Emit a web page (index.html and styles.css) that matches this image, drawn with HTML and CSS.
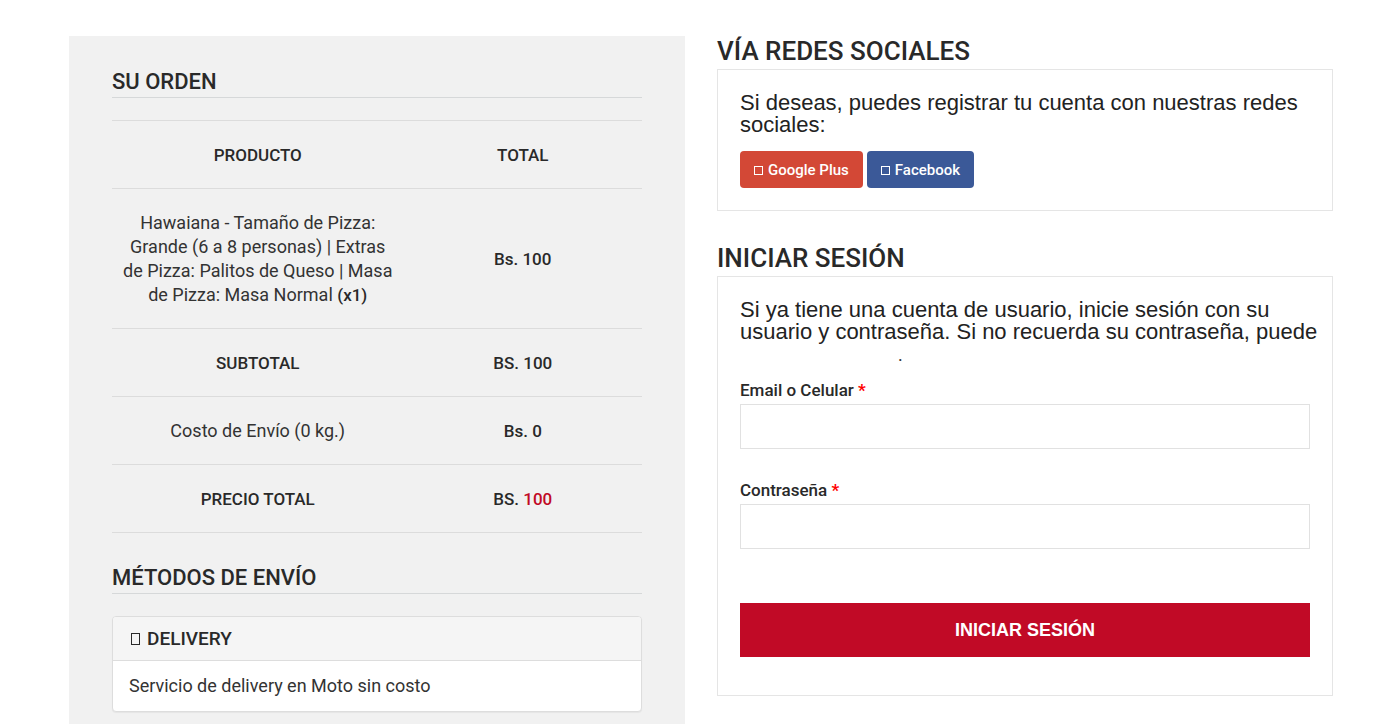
FILE: index.html
```html
<!DOCTYPE html>
<html lang="es">

<head>
    <meta charset="UTF-8">
    <meta name="viewport" content="width=device-width, initial-scale=1">
    <title>Su orden</title>
    <link rel="stylesheet" href="styles.css">
</head>
<body>
<main class="checkout">

    <section class="order">
        <h3 class="order-title">Su orden</h3>
        <table class="order-table">
            <thead>
            <tr>
                <th class="product">Producto</th>
                <th>Total</th>
            </tr>
            </thead>
            <tbody>
            <tr>
                <td>Hawaiana - Tamaño de Pizza: Grande (6 a 8 personas) | Extras de Pizza: Palitos de Queso | Masa de Pizza: Masa Normal <strong>(x1)</strong></td>
                <td><strong>Bs. 100</strong></td>
            </tr>
            </tbody>
            <tfoot>
            <tr>
                <th>Subtotal</th>
                <th>Bs. 100</th>
            </tr>
            <tr>
                <td>Costo de Envío (0 kg.)</td>
                <td><strong>Bs. 0</strong></td>
            </tr>
            <tr>
                <th>Precio total</th>
                <th>Bs. <span class="amount">100</span></th>
            </tr>
            </tfoot>
        </table>

        <h3 class="order-title">Métodos de envío</h3>
        <div class="panel">
            <h4 class="panel-heading"><i class="icon"></i>Delivery</h4>
            <div class="panel-body">Servicio de delivery en Moto sin costo</div>
        </div>
    </section>

    <div class="account">
        <section>
            <h2 class="account-title">Vía redes sociales</h2>
            <div class="box">
                <p class="intro">Si deseas, puedes registrar tu cuenta con nuestras redes sociales:</p>
                <div class="social">
                    <a href="#" class="btn btn-google"><i class="icon"></i>Google Plus</a>
                    <a href="#" class="btn btn-facebook"><i class="icon"></i>Facebook</a>
                </div>
            </div>
        </section>

        <section>
            <h2 class="account-title">Iniciar sesión</h2>
            <form class="box">
                <p class="intro">Si ya tiene una cuenta de usuario, inicie sesión con su usuario y contraseña. Si no recuerda su contraseña, puede</p>
                <p class="recover"><a href="#" class="recover-link"></a>.</p>
                <div class="field">
                    <label for="login">Email o Celular <span class="required">*</span></label>
                    <input type="text" id="login" name="login">
                </div>
                <div class="field">
                    <label for="password">Contraseña <span class="required">*</span></label>
                    <input type="password" id="password" name="password">
                </div>
                <button type="submit" class="submit">Iniciar sesión</button>
            </form>
        </section>
    </div>

</main>
</body>
</html>
```

FILE: styles.css
```css
* {
    box-sizing: border-box;
}

body {
    margin: 0;
    background: #fff;
    color: #333;
    font-family: Roboto, "Liberation Sans", sans-serif;
    font-size: 18px;
    line-height: 24px;
}

h2, h3, h4, p {
    margin: 0;
}

h2, h3, h4, th, strong, label {
    font-weight: 500;
    color: #292929;
}

h2, h3, h4, th {
    text-transform: uppercase;
}

th, strong, label {
    font-size: 17px;
}

.checkout {
    display: grid;
    grid-template-columns: 1fr 1fr;
    gap: 32px;
    padding: 36px 67px 0 69px;
}

/* order summary */
.order {
    padding: 33px 43px 12px;
    background: #f1f1f1;
}

.order-title {
    margin-bottom: 22px;
    padding-bottom: 2px;
    border-bottom: 1px solid #d6d8d9;
    font-size: 22px;
    line-height: 26px;
}

.order-table {
    width: 100%;
    margin-bottom: 32px;
    border-collapse: collapse;
    border-top: 1px solid #dcdcdc;
    text-align: center;
}

.order-table th,
.order-table td {
    padding: 22px 10px 21px;
    border-bottom: 1px solid #dcdcdc;
}

.order-table .product {
    width: 55%;
}

.amount {
    color: #c10a26;
}

.panel {
    border: 1px solid #ddd;
    border-radius: 4px;
    background: #fff;
    box-shadow: 0 1px 1px rgba(0, 0, 0, .05);
    overflow: hidden;
}

.panel-heading {
    padding: 10px 18px 9px;
    border-bottom: 1px solid #ddd;
    background: #f5f5f5;
    font-size: 19px;
}

.panel-body {
    padding: 13px 16px;
}

/* empty glyph box */
.icon {
    display: inline-block;
    width: 9px;
    height: 12px;
    margin-right: 7px;
    border: 1px solid currentColor;
}

/* account */
.account-title {
    font-size: 26px;
    line-height: 30px;
    padding-bottom: 3px;
}

.box {
    margin-bottom: 32px;
    padding: 22px;
    border: 1px solid #e5e5e5;
}

.intro {
    margin-right: -12px;
    color: #222;
    font-family: "Liberation Sans", Arial, sans-serif;
    font-size: 22px;
    line-height: 22px;
}

.social {
    display: flex;
    gap: 4px;
    margin-top: 15px;
}

.btn {
    padding: 7px 14px 6px;
    border-radius: 4px;
    color: #fff;
    font-size: 15px;
    font-weight: 500;
    text-decoration: none;
}

.btn .icon {
    height: 9px;
    margin-right: 5px;
}

.btn-google {
    background: #d34836;
}

.btn-facebook {
    background: #3b5998;
}

.recover {
    margin-bottom: 11px;
}

.recover-link {
    display: inline-block;
    width: 158px;
}

.field {
    margin-bottom: 29px;
}

.field label {
    display: block;
    margin-bottom: 2px;
}

.field input {
    display: block;
    width: 100%;
    height: 45px;
    padding: 8px 12px;
    border: 1px solid #e1e1e1;
    background: #fff;
    font: inherit;
}

.required {
    color: #f00;
    font-weight: 700;
}

.submit {
    display: block;
    width: 100%;
    margin: 54px 0 16px;
    padding: 15px;
    border: 0;
    background: #c10a26;
    color: #fff;
    font-family: "Liberation Sans", Arial, sans-serif;
    font-size: 18px;
    font-weight: 700;
    line-height: 24px;
    text-transform: uppercase;
}

.account section:last-child .box {
    margin-bottom: 0;
}
```
